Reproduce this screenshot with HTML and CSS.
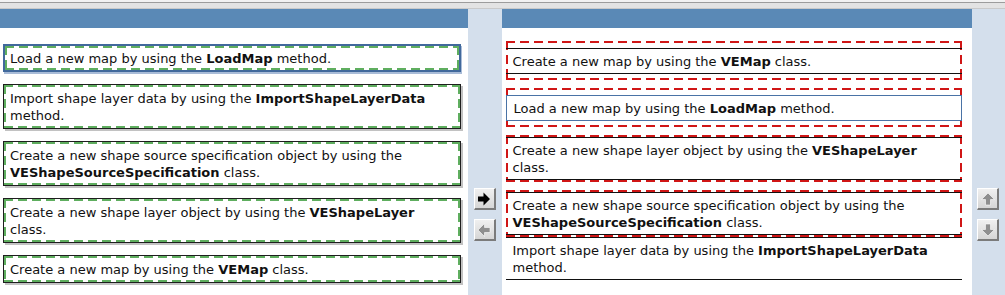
FILE: index.html
```html
<!DOCTYPE html>
<html lang="en">
<head>
  <meta charset="UTF-8">
  <title>Build List</title>
  <link rel="stylesheet" href="styles.css">
</head>
<body>
  <div class="topbar"></div>
  <div class="board">
    <!-- source list -->
    <section class="panel source">
      <div class="panel-head"></div>
      <div class="panel-body">
        <div class="item selected">Load a new map by using the <b>LoadMap</b> method.</div>
        <div class="item">Import shape layer data by using the <b>ImportShapeLayerData</b> method.</div>
        <div class="item">Create a new shape source specification object by using the <b>VEShapeSourceSpecification</b> class.</div>
        <div class="item">Create a new shape layer object by using the <b>VEShapeLayer</b> class.</div>
        <div class="item">Create a new map by using the <b>VEMap</b> class.</div>
      </div>
    </section>

    <div class="rail">
      <button class="arrow-btn">
        <svg width="14" height="14" viewBox="0 0 14 14"><polygon points="1,4.5 6.5,4.5 6.5,0.5 13,7 6.5,13.5 6.5,9.5 1,9.5" fill="#000"/></svg>
      </button>
      <button class="arrow-btn off">
        <svg width="14" height="14" viewBox="0 0 14 14"><polygon points="13,4.5 7.5,4.5 7.5,0.5 1,7 7.5,13.5 7.5,9.5 13,9.5" fill="#8f8f8f" stroke="#fff" stroke-width="0.6"/></svg>
      </button>
    </div>

    <!-- answer list -->
    <section class="panel answer">
      <div class="panel-head"></div>
      <div class="panel-body">
        <div class="slot"><div class="choice">Create a new map by using the <b>VEMap</b> class.</div></div>
        <div class="slot"><div class="choice current">Load a new map by using the <b>LoadMap</b> method.</div></div>
        <div class="slot"><div class="choice">Create a new shape layer object by using the <b>VEShapeLayer</b> class.</div></div>
        <div class="slot last"><div class="choice">Create a new shape source specification object by using the <b>VEShapeSourceSpecification</b> class.</div></div>
        <div class="choice plain">Import shape layer data by using the <b>ImportShapeLayerData</b> method.</div>
      </div>
    </section>

    <div class="rail">
      <button class="arrow-btn off">
        <svg width="14" height="14" viewBox="0 0 14 14"><polygon points="4.5,13 4.5,7.5 0.5,7.5 7,1 13.5,7.5 9.5,7.5 9.5,13" fill="#8f8f8f" stroke="#fff" stroke-width="0.6"/></svg>
      </button>
      <button class="arrow-btn off">
        <svg width="14" height="14" viewBox="0 0 14 14"><polygon points="4.5,1 4.5,6.5 0.5,6.5 7,13 13.5,6.5 9.5,6.5 9.5,1" fill="#8f8f8f" stroke="#fff" stroke-width="0.6"/></svg>
      </button>
    </div>
  </div>
</body>
</html>
```

FILE: styles.css
```css
* {
  margin: 0;
  padding: 0;
  box-sizing: border-box;
}

body {
  height: 295px;
  overflow: hidden;
  background-color: #d4dfec;
  font-family: "DejaVu Sans", Verdana, sans-serif;
  font-size: 13px;
  line-height: 17px;
  color: #111;
}

.topbar {
  height: 9px;
  background: linear-gradient(#f2f2f2 0 2px, #9c9c9c 2px 3px, #e3e3e3 3px 8px, #c9c9c9 8px);
}

.board {
  display: flex;
  height: 286px;
}

.panel {
  display: flex;
  flex-direction: column;
}

.source {
  width: 468px;
}

.answer {
  width: 470px;
}

.panel-head {
  height: 19px;
  background-color: #5a89b6;
}

.panel-body {
  flex: 1;
  background-color: #fff;
  display: flex;
  flex-direction: column;
}

.source .panel-body {
  padding: 16px 7px 0 3px;
  gap: 12px;
}

.answer .panel-body {
  padding: 13px 10px 0 4px;
}

/* dashed frame drawn with gradients so the dashes are long like the original */
.item,
.slot {
  --h-dash: repeating-linear-gradient(90deg, var(--dash) 0 9px, transparent 9px 14px);
  --v-dash: repeating-linear-gradient(180deg, var(--dash) 0 9px, transparent 9px 14px);
  background:
    var(--h-dash) left top / 100% 2px no-repeat,
    var(--h-dash) left bottom / 100% 2px no-repeat,
    var(--v-dash) left top / 2px 100% no-repeat,
    var(--v-dash) right top / 2px 100% no-repeat,
    #fff;
}

/* left list items */
.item {
  --dash: #5fae5f;
  border: 1px solid #1e1e1e;
  box-shadow: 2px 2px 0 #c2c2c2;
  padding: 5px 6px 4px;
}

.item.selected {
  border: 2px solid #41699c;
  box-shadow: 1px 2px 0 #a9bcd8;
  padding: 4px 5px 3px;
}

/* right list */
.slot {
  --dash: #d01616;
  min-height: 39px;
  margin-bottom: 8px;
  display: flex;
  flex-direction: column;
  justify-content: center;
  padding: 2px 0;
}

.slot.last {
  margin-bottom: 0;
}

.choice {
  min-height: 26px;
  border-top: 1px solid #111;
  border-bottom: 1px solid #111;
  padding: 4px 5px 3px 7px;
}

.choice.plain {
  padding-left: 7px;
}

.choice.current {
  border: 1px solid #4a73a6;
  background: #fff;
}

/* move buttons */
.rail {
  flex: 1;
  display: flex;
  flex-direction: column;
  align-items: center;
  gap: 9px;
  padding-top: 179px;
}

.arrow-btn {
  width: 22px;
  height: 22px;
  display: flex;
  align-items: center;
  justify-content: center;
  background: linear-gradient(#f0f0f0, #d6d6d6);
  border-style: solid;
  border-width: 1px 2px 2px 1px;
  border-color: #ffffff #7b7b7b #7b7b7b #ffffff;
  cursor: pointer;
}

.arrow-btn.off {
  cursor: default;
}
```
